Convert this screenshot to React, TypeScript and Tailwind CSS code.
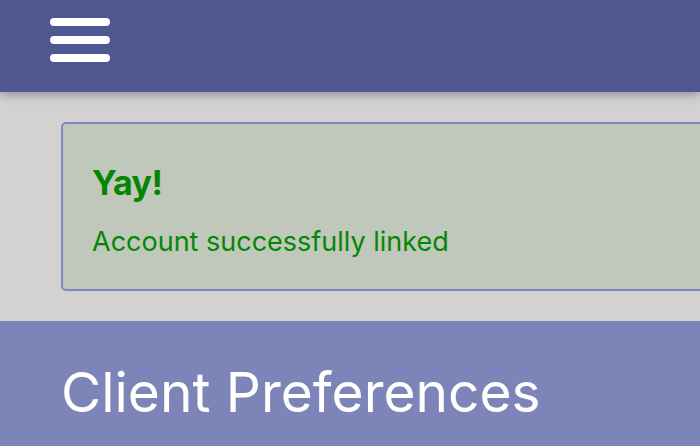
export default function App() {
  return (
    <div className="w-[700px] h-[446px] overflow-hidden bg-[#d3d1d2]" style={{ fontFamily: 'Inter, "Open Sans", sans-serif' }}>
      <header className="relative z-10 h-[92px] bg-[#4f5891] pl-[50px] pt-[18px] shadow-[0_2px_10px_rgba(0,0,0,0.35)]">
        <div className="flex flex-col gap-[10px]">
          <div className="w-[60px] h-[8px] rounded-full bg-white" />
          <div className="w-[60px] h-[8px] rounded-full bg-white" />
          <div className="w-[60px] h-[8px] rounded-full bg-white" />
        </div>
      </header>
      <div className="pt-[30px] pb-[30px] pl-[61px]">
        <div className="w-[700px] h-[169px] border-2 border-[#7f86c0] rounded-[5px] bg-[#c0c8bc] pl-[29px] pt-[39px] text-[#038703]">
          <div className="text-[34px] font-bold leading-[40px] tracking-[-0.5px]">Yay!</div>
          <div className="mt-[23px] text-[27px] leading-[32px]">Account successfully linked</div>
        </div>
      </div>
      <section className="h-[200px] bg-[#7d85b8] pl-[61px] pt-[39px]">
        <h1 className="text-white text-[55px] leading-[64px] font-normal">Client Preferences</h1>
      </section>
    </div>
  );
}
